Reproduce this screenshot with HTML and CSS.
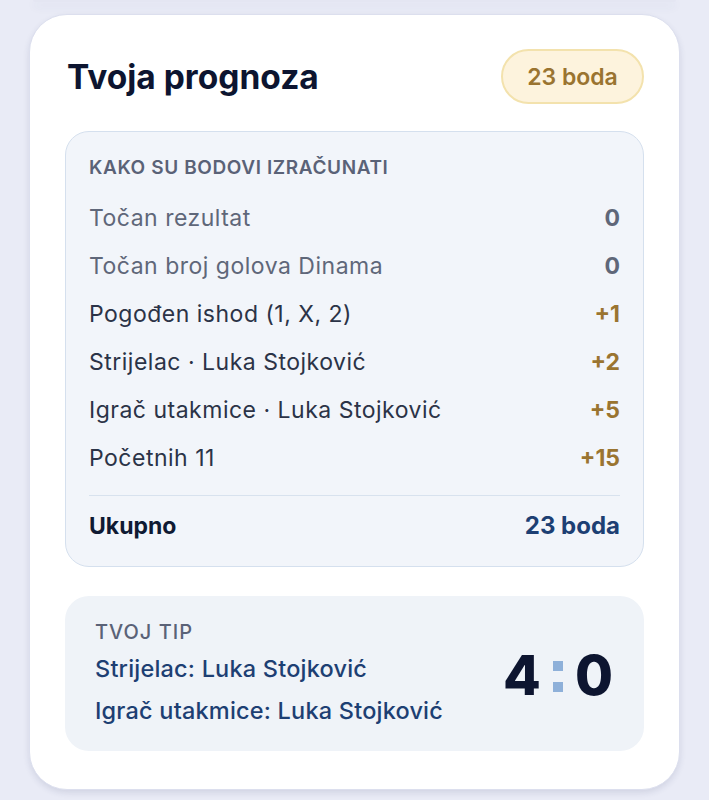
FILE: index.html
```html
<!DOCTYPE html>
<html lang="hr">
<head>
    <meta charset="UTF-8">
    <meta name="viewport" content="width=device-width, initial-scale=1.0">
    <title>Tvoja prognoza</title>
    <link rel="stylesheet" href="styles.css">
</head>
<body>

    <div class="prev-card"></div>

    <section class="prediction-card">
        <header class="card-header">
            <h2 class="card-title">Tvoja prognoza</h2>
            <span class="points-badge">23 boda</span>
        </header>

        <div class="breakdown">
            <h3 class="section-label">Kako su bodovi izračunati</h3>
            <div class="row muted">
                <span>Točan rezultat</span>
                <span class="value">0</span>
            </div>
            <div class="row muted">
                <span>Točan broj golova Dinama</span>
                <span class="value">0</span>
            </div>
            <div class="row">
                <span>Pogođen ishod (1, X, 2)</span>
                <span class="value gain">+1</span>
            </div>
            <div class="row">
                <span>Strijelac · Luka Stojković</span>
                <span class="value gain">+2</span>
            </div>
            <div class="row">
                <span>Igrač utakmice · Luka Stojković</span>
                <span class="value gain">+5</span>
            </div>
            <div class="row">
                <span>Početnih 11</span>
                <span class="value gain">+15</span>
            </div>
            <div class="row total">
                <span>Ukupno</span>
                <span class="value">23 boda</span>
            </div>
        </div>

        <div class="tip">
            <div class="tip-info">
                <h3 class="section-label">Tvoj tip</h3>
                <p class="tip-line">Strijelac: Luka Stojković</p>
                <p class="tip-line">Igrač utakmice: Luka Stojković</p>
            </div>
            <div class="score">
                <span>4</span>
                <span class="score-sep"><i></i><i></i></span>
                <span>0</span>
            </div>
        </div>
    </section>

</body>
</html>
```

FILE: styles.css
```css
body {
    font-family: 'Inter', 'Noto Sans', sans-serif;
    background-color: #e9ebf6; /* lavender page */
    color: #0f1a33;
    margin: 0;
    padding: 0 29px 12px;
    box-sizing: border-box;
    min-height: 100vh;
}

/* bottom of the card above, cut off by the viewport */
.prev-card {
    height: 2px;
    margin: 0 4px;
    background-color: #e4e6f2;
    border-radius: 0 0 30px 30px;
    box-shadow: 0 4px 10px rgba(60, 70, 120, 0.12);
}

.prediction-card {
    margin-top: 12px;
    background-color: #ffffff;
    border: 1px solid #dcdfee;
    border-radius: 38px;
    box-shadow: 0 3px 6px rgba(40, 50, 100, 0.12);
    padding: 34px 35px 38px;
}

.card-header {
    display: flex;
    align-items: center;
    justify-content: space-between;
    margin-bottom: 27px;
}

.card-title {
    margin: 0 0 0 2px;
    font-size: 33.5px;
    font-weight: 700;
    letter-spacing: 0;
    color: #0d1530;
}

.points-badge {
    display: inline-flex;
    align-items: center;
    justify-content: center;
    width: 143px;
    height: 55px;
    box-sizing: border-box;
    border: 2px solid #f3e2ad;
    border-radius: 28px;
    background-color: #fdf3dd;
    color: #9a7430;
    font-size: 23px;
    font-weight: 600;
}

/* points breakdown */
.breakdown {
    border: 1.5px solid #d5e0ee;
    border-radius: 24px;
    background-color: #f2f5fa;
    padding: 24px 23px 16px;
}

.section-label {
    margin: 0 0 13.5px;
    font-size: 19px;
    line-height: 24px;
    font-weight: 600;
    letter-spacing: 0.6px;
    text-transform: uppercase;
    color: #5a6277;
}

.row {
    display: flex;
    align-items: center;
    justify-content: space-between;
    height: 48px;
    font-size: 23px;
    letter-spacing: 0.5px;
    color: #2b3347;
}

.row.muted {
    color: #5f6779;
}

.value {
    font-weight: 700;
    letter-spacing: 0;
}

.gain {
    color: #9a7430;
}

.row.total {
    margin-top: 13px;
    padding-top: 6px;
    border-top: 1.5px solid #d8e2ee;
    font-weight: 700;
    letter-spacing: 0;
    color: #0f1a33;
}

.row.total .value {
    color: #1d3f73;
    font-size: 24px;
}

/* user's tip */
.tip {
    display: flex;
    align-items: center;
    justify-content: space-between;
    margin-top: 29px;
    border-radius: 24px;
    background-color: #eff3f8;
    padding: 24px 31px 19px 30px;
}

.tip .section-label {
    font-size: 20px;
    font-weight: 500;
    letter-spacing: 1px;
    margin-bottom: 4px;
}

.tip-line {
    margin: 0;
    font-size: 23.5px;
    font-weight: 500;
    letter-spacing: 0.2px;
    line-height: 42px;
    color: #1d3f73;
}

.score {
    display: flex;
    align-items: center;
    gap: 12px;
    font-size: 55px;
    font-weight: 800;
    color: #0d1530;
    line-height: 1;
}

.score-sep {
    display: flex;
    flex-direction: column;
    gap: 11px;
    margin-top: 2px;
}

.score-sep i {
    display: block;
    width: 10px;
    height: 10px;
    background-color: #8eb0d9;
}
```
